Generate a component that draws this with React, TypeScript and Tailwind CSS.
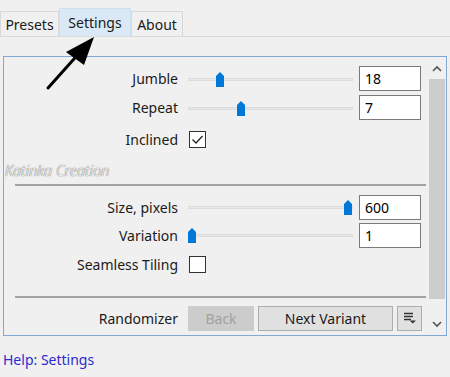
import React from 'react'

const font = { fontFamily: '"Noto Sans", "Open Sans", sans-serif' }

function Thumb() {
  return (
    <svg width="8" height="15" viewBox="0 0 8 15" className="block">
      <path d="M0 4 L4 0 L8 4 L8 15 L0 15 Z" fill="#0078d7" />
    </svg>
  )
}

function Slider({ pos }: { pos: number }) {
  return (
    <div className="relative h-[24px] w-[165px]">
      <div className="absolute left-0 right-0 top-[11px] h-[3px] border border-[#dcdcdc] bg-[#e8e8e8]" />
      <div className="absolute top-[5px]" style={{ left: pos - 4 }}>
        <Thumb />
      </div>
    </div>
  )
}

function Field({ value }: { value: string }) {
  return (
    <div className="flex h-[25px] w-[62px] items-center border border-[#7a7a7a] bg-white pl-[5px] text-[14px] text-black">
      {value}
    </div>
  )
}

function Label({ children }: { children: React.ReactNode }) {
  return <div className="w-[184px] shrink-0 pr-[10px] text-right text-[14px] text-[#1a1a1a]">{children}</div>
}

function SliderRow({ label, pos, value }: { label: string; pos: number; value: string }) {
  return (
    <div className="flex h-[25px] items-center">
      <Label>{label}</Label>
      <Slider pos={pos} />
      <div className="ml-[6px]">
        <Field value={value} />
      </div>
    </div>
  )
}

function Check({ checked }: { checked?: boolean }) {
  return (
    <div className="flex h-[17px] w-[17px] items-center justify-center border border-[#333] bg-white">
      {checked && (
        <svg width="13" height="13" viewBox="0 0 13 13">
          <path d="M1.5 6.5 L5 10 L11.5 3" fill="none" stroke="#222" strokeWidth="1.3" />
        </svg>
      )}
    </div>
  )
}

function Separator() {
  return <div className="ml-[11px] mr-[2px] border-t-2 border-[#a3a3a3]" />
}

export default function App() {
  return (
    <div className="relative h-[377px] w-[450px] overflow-hidden bg-[#f0f0f0]" style={font}>
      <div className="flex h-[37px] items-end border-b border-[#dadada]">
        <div className="flex h-[25px] w-[59px] items-center justify-center border border-b-0 border-[#d9d9d9] bg-[#f0f0f0] text-[14px] text-[#1a1a1a]">
          Presets
        </div>
        <div className="flex h-[28px] w-[72px] items-center justify-center border border-b-0 border-[#cfe0f1] bg-[#dbe9f6] text-[14px] text-[#1a1a1a]">
          Settings
        </div>
        <div className="flex h-[25px] w-[52px] items-center justify-center border border-b-0 border-[#d9d9d9] bg-[#f0f0f0] text-[14px] text-[#1a1a1a]">
          About
        </div>
      </div>

      <div className="ml-[3px] mt-[19px] flex h-[280px] w-[444px] border border-[#82a8d6] bg-[#f0f0f0]">
        <div className="flex flex-1 flex-col pt-[9px]">
          <SliderRow label="Jumble" pos={32} value="18" />
          <div className="mt-[4px]">
            <SliderRow label="Repeat" pos={53} value="7" />
          </div>
          <div className="mt-[9px] flex h-[20px] items-center">
            <Label>Inclined</Label>
            <div className="ml-[1px]">
              <Check checked />
            </div>
          </div>
          <div
            className="mt-[11px] pl-[1px] text-[14.5px] font-light italic text-[#f6f6f6]"
            style={{ textShadow: '0 0 1px #6e6e6e, 0 0 1px #6e6e6e' }}
          >
            Katinka Creation
          </div>
          <div className="mt-[2px]">
            <Separator />
          </div>
          <div className="mt-[9px]">
            <SliderRow label="Size, pixels" pos={160} value="600" />
          </div>
          <div className="mt-[3px]">
            <SliderRow label="Variation" pos={4} value="1" />
          </div>
          <div className="mt-[7px] flex h-[20px] items-center">
            <Label>Seamless Tiling</Label>
            <div className="ml-[1px]">
              <Check />
            </div>
          </div>
          <div className="mt-[21px]">
            <Separator />
          </div>
          <div className="mt-[8px] flex h-[25px] items-center">
            <Label>Randomizer</Label>
            <div className="flex h-[25px] w-[66px] items-center justify-center bg-[#cccccc] text-[14px] text-[#a0a0a0]">
              Back
            </div>
            <div className="ml-[4px] flex h-[25px] w-[135px] items-center justify-center border border-[#adadad] bg-[#e1e1e1] text-[14px] text-[#1a1a1a]">
              Next Variant
            </div>
            <div className="ml-[4px] flex h-[25px] w-[25px] items-center justify-center border border-[#adadad] bg-[#e1e1e1]">
              <svg width="14" height="12" viewBox="0 0 14 12">
                <path d="M1 1.5 H10 M1 4.5 H10 M1 7.5 H8" stroke="#333" strokeWidth="1.3" />
                <path d="M6.5 8.5 H13 L9.75 11.5 Z" fill="#333" />
              </svg>
            </div>
          </div>
        </div>

        <div className="flex w-[18px] flex-col items-center">
          <div className="flex h-[22px] w-full items-center justify-center">
            <svg width="10" height="7" viewBox="0 0 10 7">
              <path d="M1 6 L5 2 L9 6" fill="none" stroke="#555" strokeWidth="1.6" />
            </svg>
          </div>
          <div className="h-[220px] w-[16px] bg-[#cdcdcd]" />
          <div className="flex-1" />
          <div className="flex h-[22px] w-full items-center justify-center">
            <svg width="10" height="7" viewBox="0 0 10 7">
              <path d="M1 1 L5 5 L9 1" fill="none" stroke="#555" strokeWidth="1.6" />
            </svg>
          </div>
        </div>
      </div>

      <div className="ml-[3px] mt-[13px] text-[14px] text-[#2c2ccf]">Help: Settings</div>

      <svg className="absolute left-0 top-0" width="120" height="100" viewBox="0 0 120 100">
        <path d="M48 88 L82 50" stroke="#000" strokeWidth="3" strokeLinecap="round" />
        <path d="M94 37 L66 52 L84 65 Z" fill="#000" />
      </svg>
    </div>
  )
}
